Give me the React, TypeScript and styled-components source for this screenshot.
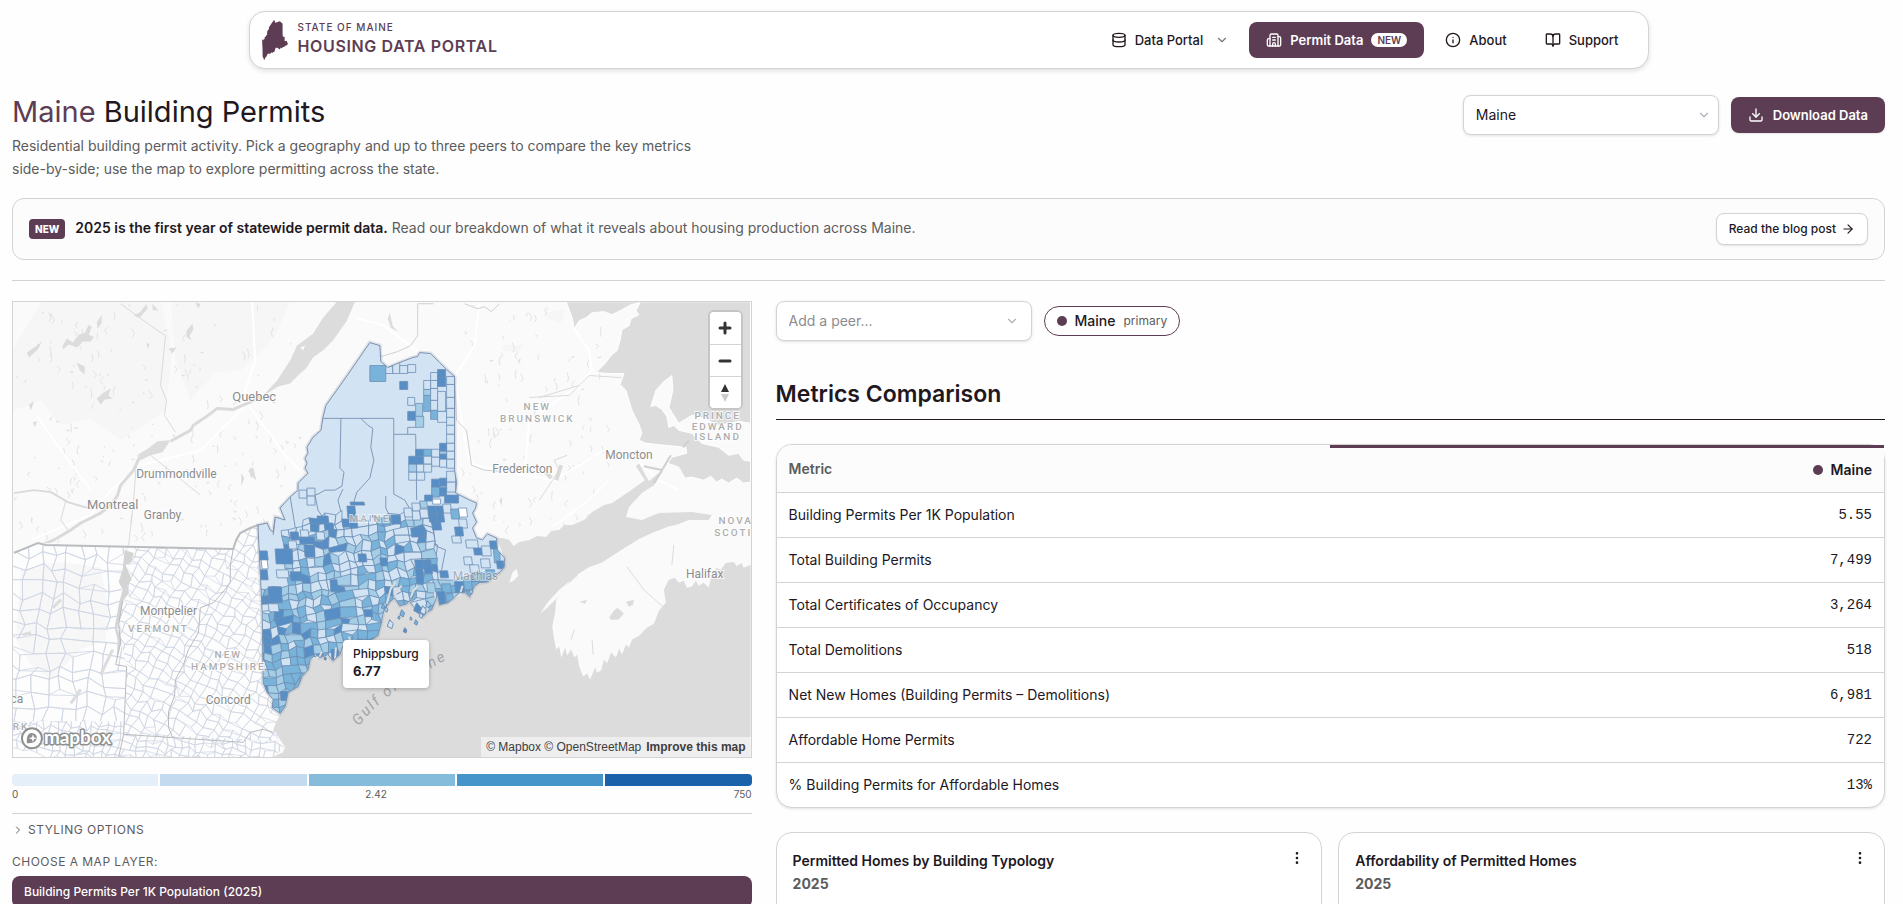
import React from 'react';
import styled, { createGlobalStyle } from 'styled-components';
import { ArrowRight, BookOpen, Building2, ChevronDown, ChevronRight, Database, Download, EllipsisVertical, Info } from 'lucide-react';

const plum = '#5d3d54';
const ink = '#21181f';
const muted = '#5c5c5c';
const line = '#d3d3d4';

const GlobalStyle = createGlobalStyle`
  *, *::before, *::after { box-sizing: border-box; }
  body { margin: 0; background: #fefefe; color: ${ink}; font: 400 14px/20px Inter, "Liberation Sans", sans-serif; }
  button, select { font: inherit; color: inherit; }
  h1, h2, h3, p { margin: 0; }
`;

const Page = styled.div`
  height: 100vh;
  overflow: hidden;
  padding: 11px 18px 0 12px;
`;

const Header = styled.header`
  display: flex;
  align-items: center;
  justify-content: space-between;
  max-width: 1400px;
  height: 58px;
  margin: 0 auto;
  padding: 0 12px;
  background: #fff;
  border: 1px solid ${line};
  border-radius: 16px;
  box-shadow: 0 2px 5px rgba(0, 0, 0, 0.12);
`;

const Brand = styled.a`
  display: flex;
  align-items: center;
  gap: 10px;
  color: ${plum};
  text-decoration: none;
`;

const BrandMark = styled.svg`
  width: 26px;
  height: 40px;
  fill: ${plum};
`;

const BrandText = styled.span`
  display: flex;
  flex-direction: column;
  padding-bottom: 4px;
`;

const BrandState = styled.span`
  font-size: 10px;
  line-height: 16px;
  font-weight: 500;
  letter-spacing: 1px;
`;

const BrandName = styled.span`
  font-size: 16px;
  line-height: 22px;
  font-weight: 600;
  letter-spacing: 0.04em;
`;

const Nav = styled.nav`
  display: flex;
  align-items: center;
  gap: 4px;
`;

const NavLink = styled.a<{ $active?: boolean }>`
  display: flex;
  align-items: center;
  gap: 8px;
  height: 36px;
  padding: 0 17px;
  border-radius: 8px;
  font-size: 13px;
  font-weight: ${(p) => (p.$active ? 600 : 500)};
  text-decoration: none;
  color: ${(p) => (p.$active ? '#fff' : ink)};
  background: ${(p) => (p.$active ? plum : 'transparent')};
`;

const NavMenu = styled.button`
  display: flex;
  align-items: center;
  gap: 8px;
  height: 36px;
  padding: 0 16px;
  border: 0;
  background: none;
  font-size: 13px;
  font-weight: 500;
`;

const MenuArrow = styled(ChevronDown)`
  margin-left: 4px;
`;

const NavBadge = styled.span`
  padding: 0 6px;
  border-radius: 7px;
  background: #fff;
  color: ${plum};
  font-size: 10px;
  line-height: 14px;
  font-weight: 600;
`;

const TitleBar = styled.section`
  display: flex;
  justify-content: space-between;
  align-items: flex-start;
  padding-top: 23px;
`;

const Title = styled.h1`
  font-size: 29px;
  line-height: 40px;
  font-weight: 400;
`;

const TitlePlace = styled.span`
  color: ${plum};
`;

const Intro = styled.p`
  max-width: 700px;
  padding-top: 2px;
  line-height: 23px;
  color: ${muted};
`;

const TitleActions = styled.div`
  display: flex;
  align-items: center;
  gap: 12px;
  padding-top: 3px;
`;

const SelectBox = styled.label`
  position: relative;
  display: block;
  width: 256px;
  height: 40px;
`;

const SelectField = styled.select<{ $placeholder?: boolean }>`
  appearance: none;
  width: 100%;
  height: 100%;
  padding: 0 36px 0 12px;
  border: 1px solid ${line};
  border-radius: 8px;
  background: #fff;
  box-shadow: 0 1px 3px rgba(0, 0, 0, 0.12);
  color: ${(p) => (p.$placeholder ? '#8c8c90' : ink)};
`;

const SelectArrow = styled(ChevronDown)`
  position: absolute;
  right: 8px;
  top: 13px;
  color: #a9b1b8;
  pointer-events: none;
`;

const PeerArrow = styled(SelectArrow)`
  right: 13px;
`;

const DownloadButton = styled.button`
  display: flex;
  align-items: center;
  gap: 9px;
  height: 36px;
  padding: 0 17px;
  border: 0;
  border-radius: 8px;
  background: ${plum};
  color: #fff;
  font-size: 13px;
  font-weight: 600;
  box-shadow: 0 1px 2px rgba(0, 0, 0, 0.1);
`;

const Banner = styled.section`
  display: flex;
  align-items: center;
  gap: 10px;
  height: 62px;
  margin-top: 18px;
  padding: 0 16px;
  border: 1px solid ${line};
  border-radius: 12px;
  background: #fcfcfc;
`;

const BannerTag = styled.span`
  padding: 0 6px;
  border-radius: 4px;
  background: ${plum};
  color: #fff;
  font-size: 10px;
  line-height: 20px;
  font-weight: 800;
`;

const BannerText = styled.p`
  flex: 1;
  padding-bottom: 2px;
  color: ${muted};
`;

const BannerLead = styled.strong`
  color: ${ink};
  font-weight: 600;
`;

const BlogLink = styled.a`
  display: flex;
  align-items: center;
  gap: 5px;
  height: 32px;
  padding: 0 12px;
  border: 1px solid ${line};
  border-radius: 8px;
  background: #fff;
  box-shadow: 0 1px 2px rgba(0, 0, 0, 0.1);
  color: ${ink};
  font-size: 12px;
  font-weight: 500;
  text-decoration: none;
`;

const Rule = styled.hr`
  height: 1px;
  margin: 20px 0;
  border: 0;
  background: ${line};
`;

const Columns = styled.main`
  display: grid;
  grid-template-columns: minmax(0, 2fr) minmax(0, 3fr);
  gap: 24px;
`;

const Column = styled.section`
  display: flex;
  flex-direction: column;
`;

const MapFrame = styled.div`
  position: relative;
  height: 457px;
  border: 1px solid ${line};
  overflow: hidden;
  background: #f8f8fa;
`;

const MapDrawing = styled.svg`
  display: block;
  width: 100%;
  height: 100%;
`;

const ZoomControls = styled.div`
  position: absolute;
  top: 8px;
  right: 8px;
  width: 35px;
  border: 2px solid #c5c5c5;
  border-radius: 6px;
  background: #fff;
  overflow: hidden;
`;

const ZoomButton = styled.button`
  display: grid;
  place-items: center;
  width: 31px;
  height: 32px;
  padding: 0;
  border: 0;
  background: #fff;
  & + & { border-top: 1px solid ${line}; }
`;

const Tooltip = styled.div`
  position: absolute;
  left: 330px;
  top: 338px;
  padding: 5px 10px 7px;
  border-radius: 4px;
  background: #fff;
  box-shadow: 0 1px 4px rgba(0, 0, 0, 0.25);
  font-size: 12px;
  line-height: 17px;
  font-weight: 500;
`;

const TooltipValue = styled.div`
  font-size: 13px;
  font-weight: 700;
  line-height: 19px;
`;

const Attribution = styled.div`
  position: absolute;
  right: 0;
  bottom: 0;
  display: flex;
  gap: 5px;
  padding: 0 5px;
  background: rgba(255, 255, 255, 0.5);
  font: 400 12px/20px "Liberation Sans", sans-serif;
`;

const AttributionLink = styled.a<{ $strong?: boolean }>`
  color: #3d3d3d;
  text-decoration: none;
  white-space: nowrap;
  font-weight: ${(p) => (p.$strong ? 700 : 400)};
`;

const Legend = styled.div`
  display: grid;
  grid-template-columns: repeat(5, 1fr);
  gap: 2px;
  margin-top: 16px;
  border-radius: 4px;
  overflow: hidden;
`;

const LegendStep = styled.span<{ $color: string }>`
  height: 12px;
  background: ${(p) => p.$color};
`;

const LegendLabels = styled.div`
  display: flex;
  justify-content: space-between;
  padding-bottom: 11px;
  border-bottom: 1px solid ${line};
  color: ${muted};
  font-size: 10px;
  line-height: 16px;
`;

const OptionsToggle = styled.button`
  display: flex;
  align-items: center;
  align-self: flex-start;
  gap: 4px;
  margin-top: 6px;
  padding: 0;
  border: 0;
  background: none;
  color: ${muted};
  font-size: 12px;
  letter-spacing: 0.04em;
`;

const LayerHeading = styled.h3`
  margin-top: 12px;
  color: ${muted};
  font-size: 12px;
  font-weight: 400;
  letter-spacing: 0.04em;
`;

const LayerButton = styled.button`
  height: 32px;
  margin-top: 4px;
  padding: 0 12px;
  border: 0;
  border-radius: 8px;
  background: ${plum};
  color: #fff;
  font-size: 12px;
  font-weight: 500;
  text-align: left;
`;

const PeerRow = styled.div`
  display: flex;
  align-items: center;
  gap: 12px;
`;

const Dot = styled.span`
  display: inline-block;
  width: 10px;
  height: 10px;
  border-radius: 50%;
  background: ${plum};
`;

const PeerPill = styled.span`
  display: flex;
  align-items: center;
  gap: 8px;
  height: 30px;
  padding: 0 12px;
  border: 1px solid ${plum};
  border-radius: 15px;
  background: #fff;
  font-weight: 500;
`;

const PeerNote = styled.span`
  color: ${muted};
  font-size: 12px;
  font-weight: 400;
`;

const SectionTitle = styled.h2`
  margin-top: 36px;
  padding-bottom: 8px;
  border-bottom: 1px solid ${ink};
  font-size: 23px;
  line-height: 34px;
  font-weight: 600;
`;

const TableCard = styled.div`
  margin-top: 24px;
  border: 1px solid ${line};
  border-radius: 16px;
  background: #fff;
  box-shadow: 0 1px 3px rgba(0, 0, 0, 0.12);
`;

const MetricsTable = styled.table`
  width: 100%;
  border-collapse: separate;
  border-spacing: 0;
  table-layout: fixed;
`;

const HeadCell = styled.th<{ $value?: boolean }>`
  height: 48px;
  padding: 0 12px;
  border-top: ${(p) => (p.$value ? `3px solid ${plum}` : 0)};
  border-bottom: 1px solid ${line};
  border-top-left-radius: ${(p) => (p.$value ? 0 : '15px')};
  background: #fcfcfc;
  color: ${(p) => (p.$value ? ink : muted)};
  font-weight: 600;
  text-align: ${(p) => (p.$value ? 'right' : 'left')};
`;

const HeadLabel = styled.span`
  display: flex;
  align-items: center;
  justify-content: flex-end;
  gap: 8px;
`;

const MetricRow = styled.tr`
  & > * { height: 45px; }
  &:last-child > * { height: 44px; }
  &:not(:last-child) > * { border-bottom: 1px solid ${line}; }
`;

const MetricName = styled.th`
  padding: 0 12px;
  font-weight: 400;
  text-align: left;
`;

const MetricValue = styled.td`
  padding: 0 12px;
  font-family: "Liberation Mono", monospace;
  text-align: right;
`;

const ChartCards = styled.div`
  display: grid;
  grid-template-columns: 1fr 1fr;
  gap: 16px;
  margin-top: 24px;
`;

const ChartCard = styled.article`
  display: flex;
  justify-content: space-between;
  align-items: flex-start;
  min-height: 320px;
  padding: 16px;
  border: 1px solid ${line};
  border-radius: 16px;
  background: #fff;
`;

const ChartTitle = styled.h3`
  font-size: 14px;
  line-height: 23px;
  font-weight: 600;
`;

const ChartYear = styled.p`
  color: ${muted};
  line-height: 23px;
  font-weight: 700;
`;

const CardMenu = styled.button`
  display: grid;
  place-items: center;
  width: 16px;
  height: 18px;
  padding: 0;
  border: 0;
  background: none;
`;

const PlaceLabel = styled.text`
  font: 400 12px Roboto, sans-serif;
  fill: #8c8c8c;
  stroke: rgba(255, 255, 255, 0.8);
  stroke-width: 2px;
  paint-order: stroke;
  text-anchor: middle;
`;

const CityLabel = styled(PlaceLabel)`
  font-size: 13px;
`;

const RegionLabel = styled(PlaceLabel)`
  font-size: 10px;
  font-weight: 500;
  fill: #adadad;
  letter-spacing: 2px;
`;

const WaterLabel = styled(PlaceLabel)`
  font-size: 15px;
  font-style: italic;
  fill: #a5a5a5;
  stroke: none;
  letter-spacing: 2px;
`;

const WordMark = styled.text`
  font: 700 19px Lato, sans-serif;
  fill: #fff;
  stroke: #8f8f8f;
  stroke-width: 3px;
  stroke-linejoin: round;
  paint-order: stroke;
`;

/* ---------- map data ---------- */

const MAINE =
  'M370 342L380 345L381 361L388 367L400 362L413 357L418 356L420 352L431 353L440 362L447 369L455 376L455 470L457 482L456 493L462 496L470 500L477 503L476 508L473 513L477 522L473 528L477 538L483 540L488 534L497 538L498 550L505 558L505 567L497 576L488 582L480 583L475 586L470 597L466 593L460 593L452 600L448 603L440 605L438 595L432 610L428 612L423 617L417 610L410 602L415 594L407 604L400 606L395 598L390 602L384 611L381 625L378 636L370 641L366 640L360 650L353 643L348 649L343 646L340 655L333 661L328 655L320 658L316 655L310 660L308 670L302 677L298 687L288 693L285 707L280 714L272 708L273 700L267 693L263 683L262 613L258 530L258 525L267 523L270 530L273 532L275 517L285 520L280 508L290 497L298 490L298 483L308 473L305 468L307 463L305 458L308 453L307 447L313 437L321 430L323 417L326 405L348 374Z';

const SEA =
  'M280 714L277 720L273 730L272 740L276 745L285 748L283 753L272 758L752 758L752 565L745 568L743 563L738 566L735 562L727 563L722 570L718 568L713 575L710 588L705 583L700 586L697 581L693 587L688 588L685 581L680 583L676 578L670 580L665 590L667 603L660 611L655 624L648 628L640 636L633 640L630 648L627 645L623 655L620 649L617 658L612 653L608 664L605 660L602 671L598 673L596 668L591 680L588 674L584 677L580 667L578 655L575 658L572 650L568 656L566 648L562 658L560 647L557 650L555 640L553 627L556 612L557 600L565 588L577 577L602 563L627 547L640 539L653 533L668 527L680 524L690 520L710 520L713 515L693 512L660 513L643 520L627 517L630 507L643 493L655 485L664 471L658 474L650 481L640 463L637 466L646 480L632 490L613 503L605 505L593 512L585 520L573 525L565 525L560 530L552 531L547 537L538 536L530 540L520 542L514 546L510 540L503 538L497 538L505 558L505 567L488 582L475 586L466 593L452 600L440 605L438 597L432 610L423 617L410 602L400 606L395 592L391 594L381 625L370 641L353 645L340 655L320 658L310 660L298 687L288 693L285 707Z';

const GULF =
  'M567 301L573 317L575 328L580 320L587 317L593 312L605 311L613 314L623 309L632 304L641 302L637 310L640 314L632 318L630 325L623 329L621 340L618 350L612 355L606 363L597 372L610 373L625 373L621 384L627 390L630 400L633 410L640 424L643 433L640 440L647 443L666 445L687 447L688 453L673 457L669 463L680 467L686 478L693 477L705 480L712 476L718 482L723 479L730 483L738 478L745 483L752 482L752 301Z';

const PEI =
  'M673 375L674 390L670 407L680 423L693 415L705 418L720 425L740 421L752 423L752 461L745 460L740 453L730 455L720 447L703 443L693 433L680 430L675 425L670 427L668 416L663 409L657 405L652 406L657 390L665 381Z';

const RIVER =
  'M337 301L355 301L347 320L333 340L324 349L313 357L306 368L300 373L290 383L278 386L262 396L277 380L290 360L297 345L313 333L323 317ZM170 440L157 441L148 448L138 454L140 460L150 455L162 452Z';

const CHAMPLAIN = 'M124 550L133 553L131 562L125 565L131 580L127 585L128 594L122 601L120 618L116 628L121 640L116 660L117 640L114 628L118 605L122 590L118 582L122 570Z';

const INLETS =
  'M437 606L435 592M410 603L413 592L418 586M395 604L396 592L402 586M387 604L391 589L396 582M352 647L349 637M335 660L336 648M318 660L322 652M341 655L343 645M309 668L314 660M427 614L429 602M460 596L463 586';

const FUNDY_ISLES = 'M510 583L513 573L517 569L519 576L514 581ZM541 614L548 603L560 590L571 581L562 594L548 608ZM578 575L590 567L605 562L592 572L580 581Z';

const US_LAND =
  'M12 554L37 543L233 549L240 533L258 525L263 683L273 700L280 714L273 730L285 748L272 758L12 758Z';

const TINTS = ['#d2e3f4', '#a5cee6', '#79b3d9', '#578ec5'];

const random = (seed: number) => () => {
  seed = (seed * 1664525 + 1013904223) % 4294967296;
  return seed / 4294967296;
};

type Cell = { d: string; x: number; y: number; roll: number };

/* Irregular patchwork of townships filling a box, turned about its centre. */
function townships(x: number, y: number, w: number, h: number, size: number, turn: number, jitter: number, seed: number): Cell[] {
  const next = random(seed);
  const cols = Math.ceil(w / size);
  const rows = Math.ceil(h / size);
  const cx = x + w / 2;
  const cy = y + h / 2;
  const cos = Math.cos(turn);
  const sin = Math.sin(turn);
  const pts: number[][][] = [];
  for (let r = 0; r <= rows; r++) {
    pts.push([]);
    for (let c = 0; c <= cols; c++) {
      const px = x + c * size + (next() - 0.5) * jitter - cx;
      const py = y + r * size + (next() - 0.5) * jitter + (c % 2) * size * 0.3 - cy;
      pts[r].push([cx + px * cos - py * sin, cy + px * sin + py * cos]);
    }
  }
  const cells: Cell[] = [];
  for (let r = 0; r < rows; r++) {
    for (let c = 0; c < cols; c++) {
      const wide = next() > 0.88 && c + 2 <= cols;
      const k = wide ? 2 : 1;
      const q = [pts[r][c], pts[r][c + k], pts[r + 1][c + k], pts[r + 1][c]];
      cells.push({
        d: 'M' + q.map((p) => `${p[0].toFixed(1)} ${p[1].toFixed(1)}`).join('L') + 'Z',
        x: (q[0][0] + q[2][0]) / 2,
        y: (q[0][1] + q[2][1]) / 2,
        roll: next(),
      });
      if (wide) c++;
    }
  }
  return cells;
}

function tint(cell: Cell) {
  const { x, y, roll } = cell;
  const west = x < 310 && y > 590;
  const coast = x + y > 985 || y > 610;
  const upper = y < 560;
  const [a, b, c] = west ? [0.08, 0.38, 0.8] : coast ? [0.2, 0.52, 0.92] : upper ? [0.6, 0.8, 0.91] : [0.42, 0.7, 0.94];
  return TINTS[roll < a ? 0 : roll < b ? 1 : roll < c ? 2 : 3];
}

const south = townships(245, 500, 270, 240, 8, -0.14, 4, 19).filter(
  (t) =>
    t.y > 516 &&
    !(t.x < 284 && t.y < 588) &&
    !(t.x < 305 && t.y < 528) &&
    !(t.x > 434 && t.y < 576) &&
    !(t.x > 410 && t.y < 520),
);
const vermont = townships(90, 500, 230, 290, 9, 0.5, 5, 5);
const newYork = townships(6, 540, 118, 230, 14, 0.06, 8, 23);
const bayState = townships(6, 712, 280, 60, 7, 0.2, 5, 31);

/* Surveyed blocks of the northern and eastern counties: x, y, width, height, tint (-1 is no data). */
const blocks: [number, number, number, number, number][] = [
  [370, 365, 16, 16, 2], [386, 366, 7, 7, 0], [393, 362, 7, 11, 0], [400, 365, 8, 8, 0], [408, 364, 8, 8, 0],
  [400, 381, 8, 8, 3], [408, 397, 7, 8, 0], [408, 411, 8, 9, 3], [416, 403, 7, 13, 1], [416, 416, 8, 11, 1],
  [424, 380, 7, 9, 0], [424, 389, 7, 6, 1], [424, 395, 7, 16, 2], [431, 372, 7, 8, 0], [431, 380, 7, 8, 0],
  [431, 388, 7, 12, 0], [431, 400, 7, 10, 0], [431, 410, 8, 9, 2], [438, 369, 8, 8, 3], [438, 377, 8, 9, 3],
  [438, 391, 8, 20, 0], [438, 411, 9, 11, 0], [447, 376, 8, 8, 0], [447, 384, 8, 13, 0], [447, 397, 8, 11, 0],
  [447, 408, 8, 9, 0], [447, 417, 8, 8, 0], [447, 425, 8, 9, 0], [447, 434, 8, 9, 0], [447, 443, 8, 8, 0],
  [447, 451, 8, 8, 0], [447, 459, 8, 9, 0], [447, 471, 9, 11, 0], [447, 482, 9, 10, 0],
  [409, 456, 8, 8, 3], [416, 449, 8, 7, 3], [416, 456, 8, 8, 3], [424, 449, 8, 7, 2], [424, 456, 8, 8, 0],
  [432, 449, 8, 8, 0], [432, 457, 8, 9, 0], [409, 464, 8, 8, 1], [417, 464, 8, 8, 0], [424, 464, 8, 8, 0],
  [409, 472, 8, 8, 0], [417, 472, 8, 8, 0], [440, 443, 7, 8, 3], [440, 451, 7, 3, 1], [440, 454, 7, 5, 3],
  [440, 459, 7, 8, 0], [432, 479, 8, 8, 3], [440, 478, 7, 8, 3], [432, 487, 8, 10, 2], [440, 487, 7, 9, 3],
  [425, 495, 8, 6, 3], [445, 495, 14, 8, 3], [420, 501, 7, 7, 1], [428, 506, 8, 8, 3], [436, 506, 7, 8, 3],
  [412, 503, 8, 8, 0], [412, 511, 8, 9, 0], [420, 509, 8, 9, 0], [404, 508, 8, 9, 0], [443, 504, 8, 9, 0],
  [429, 514, 8, 8, 3], [437, 514, 7, 8, 3], [432, 522, 9, 8, 3], [433, 499, 8, 5, -1], [451, 509, 8, 10, 2],
  [459, 508, 8, 9, -1], [459, 519, 8, 9, 0], [455, 527, 8, 9, 3], [299, 490, 8, 8, 0], [307, 488, 8, 8, 0],
  [307, 496, 8, 9, 0], [317, 516, 11, 8, 3], [324, 523, 9, 7, 3], [347, 506, 8, 12, 3], [350, 502, 14, 3, 3],
  [342, 519, 7, 8, 3], [349, 518, 8, 10, 3], [391, 515, 9, 9, 3], [382, 518, 8, 7, 2], [411, 528, 13, 9, 3],
  [290, 532, 8, 8, 3], [299, 537, 15, 7, 3], [258, 551, 9, 9, 3], [261, 560, 6, 9, -1], [260, 570, 7, 10, 3],
  [275, 549, 17, 15, 3], [268, 587, 13, 16, 3], [290, 572, 11, 9, 3], [276, 570, 12, 8, 0], [304, 545, 10, 12, 3],
  [300, 530, 8, 7, 0], [316, 532, 8, 8, 0], [288, 541, 8, 8, 0], [268, 604, 10, 8, 0],
  [452, 536, 9, 7, 0], [440, 571, 8, 7, 3], [415, 560, 8, 9, 3], [423, 560, 8, 9, 3], [416, 569, 7, 15, 3],
  [424, 565, 8, 9, 3], [464, 557, 8, 8, 0], [474, 548, 8, 7, 3], [482, 546, 9, 10, 0], [470, 565, 9, 8, 0],
  [466, 540, 12, 8, 0], [481, 559, 9, 9, 0], [473, 573, 10, 8, 2], [490, 541, 8, 8, 3], [494, 549, 6, 14, 2],
  [497, 561, 7, 8, 3], [455, 582, 9, 11, 3], [442, 584, 9, 9, 2], [464, 581, 8, 9, 2], [486, 570, 9, 9, 2],
  [437, 592, 8, 13, 3], [427, 583, 8, 10, 1], [446, 594, 7, 8, 2], [358, 554, 8, 8, 3], [380, 558, 7, 8, 3],
  [330, 580, 7, 12, 3], [364, 610, 8, 7, 3], [331, 650, 7, 11, 3], [280, 692, 9, 9, 3],
];

const COUNTY_LINES =
  'M323 418H394V494M341 418L340 468L344 472L342 486L335 490L325 490L318 494L309 496M361 418L368 425L373 428L371 447L374 460L370 478L357 492L353 505M394 434L416 434L417 500M408 434V427L416 427M343 489L338 500L341 512L343 530M290 496L298 545M315 495L318 510L328 525M386 496V508L392 520M275 519L273 535M394 494L405 500L412 512M424 540L438 545L436 560L440 590M434 530L436 546L446 550L442 570';

const ISLES = [
  [390, 625, 5], [386, 610, 3], [402, 614, 4], [417, 609, 6], [423, 611, 5], [428, 605, 4], [416, 623, 3], [405, 631, 3],
  [421, 616, 3], [411, 619, 2], [383, 607, 3], [325, 659, 2], [315, 656, 2], [471, 592, 3], [399, 618, 2],
];

/* Small ponds and streams scattered over the open country. */
const ponds = (() => {
  const next = random(77);
  let d = '';
  for (let i = 0; i < 380; i++) {
    const x = 14 + next() * 600;
    const y = 303 + next() * 235;
    const a = (next() * 7 + 1) * (next() > 0.7 ? -1 : 1);
    const b = next() * 7 - 1;
    if (x > 300 && x < 458) continue;
    d += `M${x.toFixed(0)} ${y.toFixed(0)}l${(a / 2).toFixed(1)} ${b.toFixed(1)}l${(-a / 3).toFixed(1)} ${(b / 2 + 1).toFixed(1)}`;
  }
  return d;
})();

const LAKES =
  'M62 345L66 338L72 342L78 334L84 332L88 324L91 326L88 334L93 336L90 341L82 341L76 347L68 344L62 349ZM96 322L101 314L101 322L97 328ZM133 315L140 311L146 303L147 308L139 317ZM186 330L192 323L193 329L189 335L191 340L186 336ZM168 348L176 347L172 353ZM26 352L36 345L41 341L37 349L28 357ZM96 398L103 392L110 388L108 395L112 398L104 399L100 404ZM28 404L33 401L30 410ZM32 422L36 421L34 427ZM248 470L253 467L256 480L251 476ZM241 473L244 478L241 486ZM390 312L393 325L398 331L391 327L388 318ZM76 362L84 366L84 374L79 370ZM195 302L200 303L198 308ZM152 303L158 310L152 309ZM500 500L503 497L502 506ZM146 342L149 344L147 349Z';

const metrics: [string, string][] = [
  ['Building Permits Per 1K Population', '5.55'],
  ['Total Building Permits', '7,499'],
  ['Total Certificates of Occupancy', '3,264'],
  ['Total Demolitions', '518'],
  ['Net New Homes (Building Permits – Demolitions)', '6,981'],
  ['Affordable Home Permits', '722'],
  ['% Building Permits for Affordable Homes', '13%'],
];

const legendColors = ['#e5eff9', '#c4daee', '#85bcdc', '#4695ca', '#1a62aa'];

function PermitMap() {
  return (
    <MapDrawing viewBox="12 301 740 457" preserveAspectRatio="xMidYMid slice" role="img" aria-label="Map of building permits in Maine">
      <defs>
        <clipPath id="maine"><path d={MAINE} /></clipPath>
        <clipPath id="states"><path d={US_LAND} /></clipPath>
        <clipPath id="west"><path d="M12 543L125 547L119 610L120 640L126 667L123 722L12 722Z" /></clipPath>
        <clipPath id="north"><path d="M125 545L260 520L265 690L280 712L278 742L123 734L126 667L119 630Z" /></clipPath>
        <clipPath id="base"><path d="M12 722L123 722L123 734L280 742L290 758L12 758Z" /></clipPath>
      </defs>
      <rect x="12" y="301" width="740" height="457" fill="#fafafb" />
      <g fill="#f6f6f7">
        <path d="M40 301L160 301L172 350L165 410L120 440L90 418L60 425L40 400L12 410L12 350Z" />
        <path d="M170 301L290 301L275 335L262 350L240 370L215 372L190 400L175 360Z" />
        <path d="M548 312L566 308L562 322L548 318ZM502 345L525 344L518 352L504 350Z" />
      </g>
      <path d={ponds} fill="none" stroke="#e2e2e3" strokeWidth="1" />
      <path d={LAKES} fill="#dcdcdc" />
      <g fill="none" stroke="#fff" strokeWidth="2">
        <path d="M252 301L255 360L245 390L247 403L200 450L140 465L110 490L90 515L30 540M247 403L285 455L300 470M36 415L60 450L90 490M355 317L385 325L410 345L420 352M480 303L475 345L455 376L468 455L475 465L525 475L555 480L605 450M525 475L530 420L580 385L593 370M575 328L590 350L593 372" />
        <path d="M640 462L660 480L680 490M553 527L590 500L610 480" />
      </g>
      <path d={RIVER} fill="#dcdcdc" />
      <path d="M300 347L305 345L303 350Z" fill="#fafafb" />
      <g fill="none" stroke="#dadada" strokeLinejoin="round">
        <path strokeWidth="3" d="M262 396L247 403L233 409L217 408L205 417L193 425L190 430L170 441M139 457L133 470L120 485L117 495L112 503L100 513L80 523L70 530L53 540L37 547L13 553" />
        <path strokeWidth="2" d="M13 493L33 490L50 492L67 502L80 506L92 509" />
        <path strokeWidth="1" d="M65 500L60 520L67 530M136 460L133 500L128 545L125 550M165 335L160 385L166 400L164 415L175 432M150 455L175 475L200 495M120 303L150 325L165 335M540 500L560 470L555 460L568 455M540 397L580 385M640 380L620 377L590 375L570 395L530 397" />
        <path strokeWidth="4" d="M557 480L562 465M552 478L545 470" />
      </g>
      <g fill="none" stroke="#d0d0d0">
        <path d="M418 303V335L411 345L398 351L381 356M418 303H434M465 303L478 308L485 306L492 311L500 303" />
        <path d="M455 376L457 420L467 430L472 465L485 470L500 471" />
      </g>
      <path d={SEA} fill="#dcdcdc" />
      <path d={GULF} fill="#dcdcdc" stroke="#fff" strokeWidth="1" />
      <path d={PEI} fill="#fafafb" stroke="#fff" strokeWidth="1" />
      <path d={FUNDY_ISLES} fill="#fafafb" />
      <path d="M672 455L660 475L655 483M664 470L645 466M690 440L684 447" fill="none" stroke="#d0d0d0" strokeWidth="2" />
      <path d="M610 618L614 612L618 608L622 611L625 614L619 620L612 620ZM580 602L588 600L586 604ZM627 602L635 600L634 605L630 607Z" fill="#dcdcdc" />
      <path d="M628 567L645 590L665 608M675 545L673 565M593 640L594 655M575 630L572 640" fill="none" stroke="#dcdcdc" />

      <path d={US_LAND} fill="#fdfdfd" />
      <path d="M20 570L60 562L100 568L108 610L105 640L80 650L50 680L30 665L15 640Z" fill="#f7f7f8" />
      <g clipPath="url(#states)" fill="none" stroke="#ced5e2" strokeWidth="1">
        <g clipPath="url(#west)">{newYork.map((t) => <path key={t.d} d={t.d} strokeOpacity="0.8" />)}</g>
        <g clipPath="url(#north)">{vermont.map((t) => <path key={t.d} d={t.d} strokeOpacity="0.7" />)}</g>
        <g clipPath="url(#base)">{bayState.map((t) => <path key={t.d} d={t.d} strokeOpacity="0.7" />)}</g>
      </g>
      <path d={CHAMPLAIN} fill="#d4d4d4" />
      <path d="M112 650L100 675M80 690L70 704M60 600L52 608M22 635L30 633" stroke="#dcdcdc" strokeWidth="3" fill="none" />
      <g fill="none" stroke="#b9bbbf" strokeWidth="1">
        <path strokeWidth="2" d="M13 553L37 543L45 545L233 549L236 540L240 533L250 528L258 525" />
        <path d="M122 601L118 625L120 643L115 665L126 667L123 735L118 758M123 735L243 743L250 733L263 730L273 733" />
        <path d="M233 549L230 565L230 583L222 593L213 603L200 608L198 633L188 650L183 665L175 680L174 697L168 712L168 728L172 738" />
      </g>

      <path d={MAINE} fill="#d2e3f4" stroke="#8c97a8" strokeWidth="4" strokeOpacity="0.25" />
      <g clipPath="url(#maine)">
        <path d={MAINE} fill="#d2e3f4" />
        <path d={COUNTY_LINES} fill="none" stroke="#8099b8" />
        <g stroke="#6d8fb5" strokeOpacity="0.8" strokeWidth="1">
          {south.map((t) => <path key={t.d} d={t.d} fill={tint(t)} />)}
          {blocks.map(([x, y, w, h, t]) => (
            <path key={`${x}-${y}`} d={`M${x} ${y}h${w}l${y > 500 ? 1 : 0} ${h}h${-w}Z`} fill={t < 0 ? '#fff' : TINTS[t]} />
          ))}
        </g>
        <path d={INLETS} fill="none" stroke="#dcdcdc" strokeWidth="2" />
      </g>
      <path d={MAINE} fill="none" stroke="#7c93b0" strokeWidth="1" />
      <g stroke="#6d8fb5" strokeWidth="1">
        {ISLES.map(([x, y, r], i) => (
          <path key={i} d={`M${x} ${y - r}l${r * 0.7} ${r * 0.8}l${-r * 0.3} ${r}l${-r * 0.9} ${-r * 0.5}Z`} fill={TINTS[i % 4]} />
        ))}
      </g>

      <CityLabel x="254" y="401">Quebec</CityLabel>
      <PlaceLabel x="176" y="478">Drummondville</PlaceLabel>
      <CityLabel x="112" y="509">Montreal</CityLabel>
      <PlaceLabel x="162" y="519">Granby</PlaceLabel>
      <PlaceLabel x="523" y="473">Fredericton</PlaceLabel>
      <PlaceLabel x="630" y="459">Moncton</PlaceLabel>
      <PlaceLabel x="706" y="578">Halifax</PlaceLabel>
      <PlaceLabel x="476" y="580" opacity="0.6">Machias</PlaceLabel>
      <PlaceLabel x="168" y="615">Montpelier</PlaceLabel>
      <PlaceLabel x="228" y="705">Concord</PlaceLabel>
      <PlaceLabel x="16" y="704">ca</PlaceLabel>
      <RegionLabel x="20" y="731">RK</RegionLabel>
      <RegionLabel x="158" y="632">VERMONT</RegionLabel>
      <RegionLabel x="228" y="658">NEW</RegionLabel>
      <RegionLabel x="228" y="670">HAMPSHIRE</RegionLabel>
      <RegionLabel x="538" y="410">NEW</RegionLabel>
      <RegionLabel x="538" y="422">BRUNSWICK</RegionLabel>
      <RegionLabel x="719" y="419">PRINCE</RegionLabel>
      <RegionLabel x="719" y="430">EDWARD</RegionLabel>
      <RegionLabel x="719" y="440">ISLAND</RegionLabel>
      <RegionLabel x="737" y="524">NOVA</RegionLabel>
      <RegionLabel x="739" y="536">SCOTIA</RegionLabel>
      <RegionLabel x="370" y="522" opacity="0.8">MAINE</RegionLabel>
      <path id="gulf-line" d="M361 724C381 700 401 685 445 661" fill="none" />
      <WaterLabel><textPath href="#gulf-line" startOffset="50%">Gulf of Maine</textPath></WaterLabel>

      <circle cx="31" cy="739" r="10" fill="#fff" stroke="#8f8f8f" strokeWidth="2" />
      <path d="M26 744C25 735 29 733 32 734C37 735 37 741 33 743C31 744 28 744 26 744Z" fill="#8f8f8f" />
      <path d="M32 735L33 738L36 739L33 740L32 743L31 740L28 739L31 738Z" fill="#fff" />
      <WordMark x="43" y="745">mapbox</WordMark>
    </MapDrawing>
  );
}

export default function App() {
  return (
    <>
      <GlobalStyle />
      <Page>
        <Header>
          <Brand href="#home">
            <BrandMark viewBox="257 340 250 376" preserveAspectRatio="none" aria-hidden="true"><path d={MAINE} /></BrandMark>
            <BrandText>
              <BrandState>STATE OF MAINE</BrandState>
              <BrandName>HOUSING DATA PORTAL</BrandName>
            </BrandText>
          </Brand>
          <Nav aria-label="Main">
            <NavMenu type="button"><Database size={16} />Data Portal<MenuArrow size={14} color="#777" /></NavMenu>
            <NavLink href="#permits" $active><Building2 size={16} />Permit Data<NavBadge>NEW</NavBadge></NavLink>
            <NavLink href="#about"><Info size={16} />About</NavLink>
            <NavLink href="#support"><BookOpen size={16} />Support</NavLink>
          </Nav>
        </Header>

        <TitleBar>
          <div>
            <Title><TitlePlace>Maine</TitlePlace> Building Permits</Title>
            <Intro>
              Residential building permit activity. Pick a geography and up to three peers to compare the key metrics
              side-by-side; use the map to explore permitting across the state.
            </Intro>
          </div>
          <TitleActions>
            <SelectBox>
              <SelectField aria-label="Geography" defaultValue="Maine"><option>Maine</option></SelectField>
              <SelectArrow size={14} />
            </SelectBox>
            <DownloadButton type="button"><Download size={16} />Download Data</DownloadButton>
          </TitleActions>
        </TitleBar>

        <Banner>
          <BannerTag>NEW</BannerTag>
          <BannerText>
            <BannerLead>2025 is the first year of statewide permit data.</BannerLead> Read our breakdown of what it reveals about
            housing production across Maine.
          </BannerText>
          <BlogLink href="#blog">Read the blog post<ArrowRight size={14} /></BlogLink>
        </Banner>
        <Rule />

        <Columns>
          <Column>
            <MapFrame>
              <PermitMap />
              <ZoomControls>
                <ZoomButton type="button" aria-label="Zoom in">
                  <svg width="14" height="14" viewBox="0 0 14 14"><path d="M7 2V12M2 7H12" stroke="#333" strokeWidth="3" strokeLinecap="round" /></svg>
                </ZoomButton>
                <ZoomButton type="button" aria-label="Zoom out">
                  <svg width="14" height="14" viewBox="0 0 14 14"><path d="M2 7H12" stroke="#333" strokeWidth="3" strokeLinecap="round" /></svg>
                </ZoomButton>
                <ZoomButton type="button" aria-label="Reset north">
                  <svg width="10" height="20" viewBox="0 0 10 20"><path d="M5 1L9 9H1Z" fill="#333" /><path d="M5 19L9 11H1Z" fill="#ccc" /></svg>
                </ZoomButton>
              </ZoomControls>
              <Tooltip>Phippsburg<TooltipValue>6.77</TooltipValue></Tooltip>
              <Attribution>
                <AttributionLink href="#attribution">© Mapbox © OpenStreetMap</AttributionLink>
                <AttributionLink href="#improve" $strong>Improve this map</AttributionLink>
              </Attribution>
            </MapFrame>
            <Legend>{legendColors.map((c) => <LegendStep key={c} $color={c} />)}</Legend>
            <LegendLabels><span>0</span><span>2.42</span><span>750</span></LegendLabels>
            <OptionsToggle type="button"><ChevronRight size={12} />STYLING OPTIONS</OptionsToggle>
            <LayerHeading>CHOOSE A MAP LAYER:</LayerHeading>
            <LayerButton type="button">Building Permits Per 1K Population (2025)</LayerButton>
          </Column>

          <Column>
            <PeerRow>
              <SelectBox>
                <SelectField aria-label="Peer" $placeholder defaultValue=""><option value="">Add a peer...</option></SelectField>
                <PeerArrow size={14} />
              </SelectBox>
              <PeerPill><Dot />Maine<PeerNote>primary</PeerNote></PeerPill>
            </PeerRow>
            <SectionTitle>Metrics Comparison</SectionTitle>
            <TableCard>
              <MetricsTable>
                <thead>
                  <tr>
                    <HeadCell scope="col">Metric</HeadCell>
                    <HeadCell scope="col" $value><HeadLabel><Dot />Maine</HeadLabel></HeadCell>
                  </tr>
                </thead>
                <tbody>
                  {metrics.map(([name, value]) => (
                    <MetricRow key={name}>
                      <MetricName scope="row">{name}</MetricName>
                      <MetricValue>{value}</MetricValue>
                    </MetricRow>
                  ))}
                </tbody>
              </MetricsTable>
            </TableCard>
            <ChartCards>
              {['Permitted Homes by Building Typology', 'Affordability of Permitted Homes'].map((title) => (
                <ChartCard key={title}>
                  <div>
                    <ChartTitle>{title}</ChartTitle>
                    <ChartYear>2025</ChartYear>
                  </div>
                  <CardMenu type="button" aria-label="Chart options"><EllipsisVertical size={16} strokeWidth={2} /></CardMenu>
                </ChartCard>
              ))}
            </ChartCards>
          </Column>
        </Columns>
      </Page>
    </>
  );
}
